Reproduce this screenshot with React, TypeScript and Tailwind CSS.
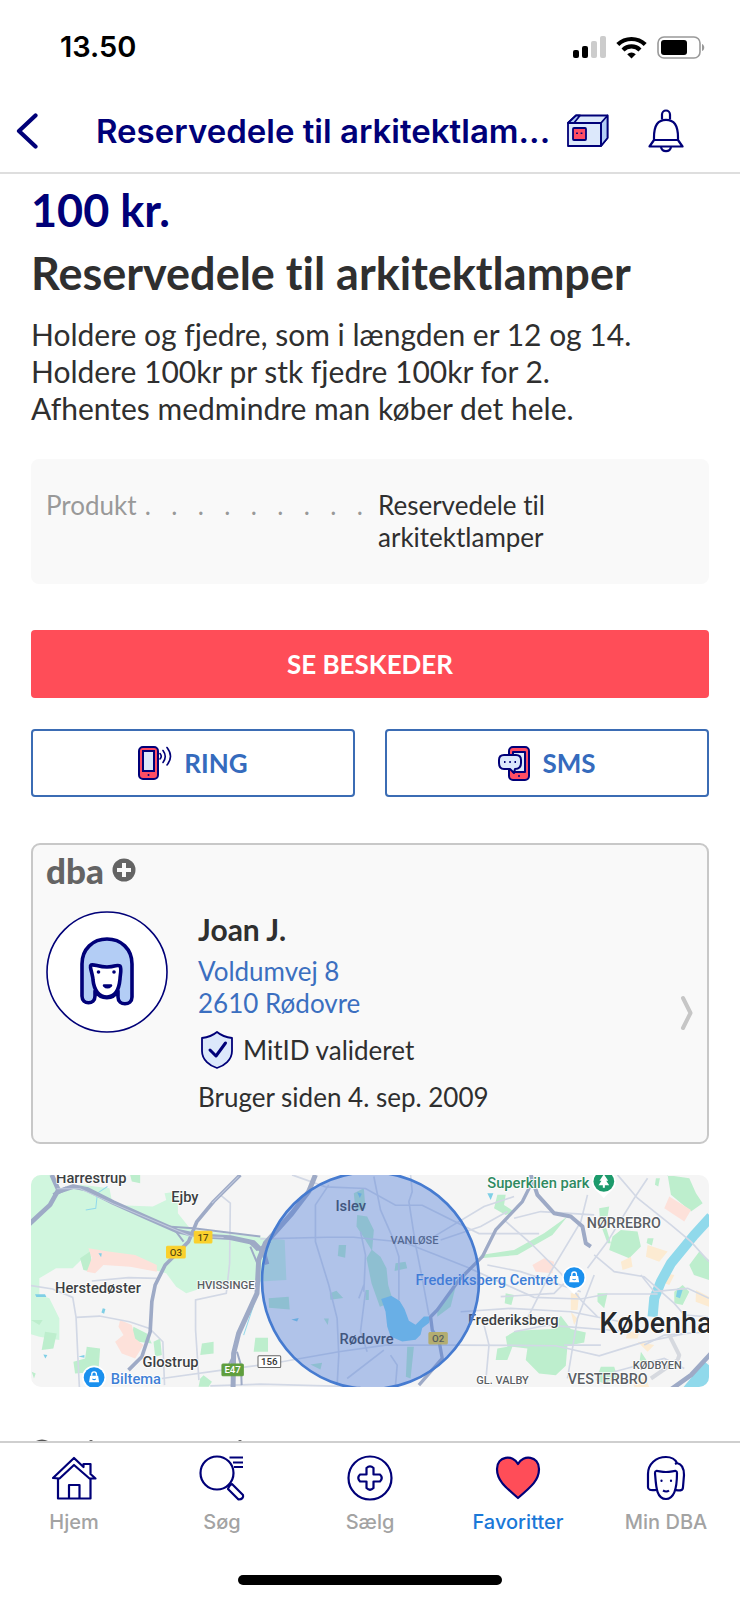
import type { ReactNode } from 'react';

const NAVY = '#000078';

function StatusBar() {
  return (
    <div className="flex h-[92px] items-center justify-between pt-[2px] pl-[60px] pr-[34px] text-black">
      <span className="text-[29px] leading-8 font-semibold">13.50</span>
      <div className="flex items-center gap-[10px]">
        {/* Signal */}
        <svg width="33" height="22" viewBox="0 0 33 22" aria-hidden="true">
          <rect x="0" y="14" width="6" height="8" rx="2" fill="#000" />
          <rect x="9" y="10" width="6" height="12" rx="2" fill="#000" />
          <rect x="18" y="5" width="6" height="17" rx="2" fill="#ccc" />
          <rect x="27" y="0" width="6" height="22" rx="2" fill="#ccc" />
        </svg>
        {/* Wifi */}
        <svg width="31" height="23" viewBox="0 0 31 23" fill="none" stroke="#000" strokeWidth="4.2" aria-hidden="true">
          <path d="M1.800 8.600a19.500 19.500 0 0 1 27.400 0" />
          <path d="M7 14a12 12 0 0 1 17 0" />
          <path d="M15.500 22.500l-4.300-4.300a6 6 0 0 1 8.600 0z" fill="#000" stroke="none" />
        </svg>
        {/* Battery */}
        <svg width="49" height="23" viewBox="0 0 49 23" aria-hidden="true">
          <rect x="1" y="1" width="42" height="21" rx="6" fill="none" stroke="#999" strokeWidth="1.600" />
          <rect x="4" y="4" width="26" height="15" rx="3" fill="#000" />
          <path d="M45 8c3 1 3 6 0 7z" fill="#999" />
        </svg>
      </div>
    </div>
  );
}

function Header() {
  return (
    <header className="flex h-[82px] items-center border-b-2 border-[#dedede] pb-[3px] pl-[16px] pr-[56px] text-[#000078]">
      <button type="button" aria-label="Tilbage" className="w-[80px] shrink-0">
        <svg width="22" height="36" viewBox="0 0 22 36" fill="none" stroke={NAVY} strokeWidth="4.200" strokeLinecap="round" strokeLinejoin="round">
          <path d="M19.500 2.500L3 18l16.500 15.500" />
        </svg>
      </button>
      <h1 className="min-w-0 flex-1 truncate text-[33px] leading-10 font-semibold">Reservedele til arkitektlam...</h1>
      <button type="button" aria-label="Pakke" className="ml-2 shrink-0">
        <svg width="42" height="33" viewBox="0 0 42 33" stroke={NAVY} strokeWidth="1.800" strokeLinejoin="round">
          <path d="M1 9L9 1.500h31.500V24L34 32H1z" fill="#dce8fb" />
          <path d="M34 9l6.500-7.500V24L34 32zM1 9l8-7.500h4L7 9z" fill="#b3cdf5" />
          <path d="M1 9h33v23" fill="none" />
          <rect x="6" y="14" width="13" height="12" rx="1" fill="#ff4d63" />
          <path d="M10 18.500v1.500M14.500 18.500v1.500" />
        </svg>
      </button>
      <button type="button" aria-label="Notifikationer" className="ml-[39px] shrink-0">
        <svg width="36" height="44" viewBox="0 0 36 44" fill="none" stroke={NAVY} strokeWidth="2.200" strokeLinejoin="round">
          <path d="M14 10.500V5.500a4 4 0 0 1 8 0v5" />
          <path d="M6 31c0-5-.5-11 3-16 4-5.500 14-5.500 18 0 3.500 5 3 11 3 16l4.500 6.500h-33z" />
          <path d="M6 31h24M13 38c1 5.500 9 5.500 10 0" />
        </svg>
      </button>
    </header>
  );
}

function PhoneIcon() {
  return (
    <svg width="34" height="34" viewBox="0 0 34 34" fill="none" stroke={NAVY} strokeWidth="2" aria-hidden="true">
      <rect x="1" y="1" width="19" height="32" rx="4" fill="#ff4d63" />
      <rect x="5" y="5" width="11" height="20" fill="#dce8fb" />
      <circle cx="10.500" cy="29" r="1" fill={NAVY} stroke="none" />
      <path d="M22 7.500q2.500 2.800 0 5.500M25 4.500q4.500 6 0 12M29 1.500q7 9 0 17.500" strokeWidth="1.600" strokeLinecap="round" />
    </svg>
  );
}

function SmsIcon() {
  return (
    <svg width="32" height="35" viewBox="0 0 32 35" fill="none" stroke={NAVY} strokeWidth="2" strokeLinejoin="round" aria-hidden="true">
      <rect x="11" y="1" width="20" height="33" rx="4" fill="#ff4d63" />
      <rect x="15" y="6" width="12" height="20" fill="#dce8fb" />
      <circle cx="21" cy="30" r="1" fill={NAVY} stroke="none" />
      <path d="M6 9h12q5 0 5 5v3q0 6-6 6l-1 4-4-4H6q-5 0-5-6v-3q0-5 5-5z" fill="#dce8fb" />
      <path d="M6 16h1.500M11.300 16h1.500M16.500 16H18" />
    </svg>
  );
}

function ContactButton({ icon, label }: { icon: ReactNode; label: string }) {
  return (
    <button
      type="button"
      className="flex h-[68px] items-center justify-center gap-3 rounded border-2 border-[#3b6cb4] text-[26px] leading-8 font-bold text-[#356bbd]"
    >
      {icon}
      {label}
    </button>
  );
}

function SellerCard() {
  return (
    <section className="mt-[46px] rounded-[9px] border-2 border-[#c8c8c8] bg-[#f9f9f9] px-[13px] pt-[6px] pb-[29px] text-[26px] leading-8 text-[#2f2f2f]">
      <div className="flex items-center gap-2 text-[#646464]">
        <span className="text-[35px] leading-[38px] font-black">dba</span>
        <svg width="24" height="24" viewBox="0 0 24 24" aria-hidden="true">
          <circle cx="12" cy="12" r="11.500" fill="#646464" />
          <path d="M12 5v14M5 12h14" stroke="#f9f9f9" strokeWidth="4" />
        </svg>
      </div>
      <div className="mt-[22px] flex items-start">
        <svg className="shrink-0" width="122" height="122" viewBox="0 0 122 122" fill="none" stroke={NAVY} strokeWidth="3.600" strokeLinecap="round" strokeLinejoin="round" aria-hidden="true">
          <circle cx="61" cy="61" r="60" fill="#fff" strokeWidth="1.600" />
          <path
            d="M36 53c0-15 11-25 25-25s25 10 25 25v33c0 9-14 9-14 0V80c-5 9-17 9-23 0v5c0 9-13 9-13 0z"
            fill="#b3cdf5"
          />
          <path
            d="M45 54c4-1 7 2 16 2s10-3 13-1c2 3 0 9 0 13-1 11-5 18-13 18s-13-7-14-17c0-5-4-14-2-15z"
            fill="#fff"
          />
          <path d="M58 74.500q3.500 3.500 7 0z" strokeWidth="2.500" />
          <circle cx="52.500" cy="61" r="1.800" fill={NAVY} stroke="none" />
          <circle cx="68" cy="61" r="1.800" fill={NAVY} stroke="none" />
        </svg>
        <div className="ml-[30px] flex-1">
          <h3 className="text-[30px] leading-9 font-bold">Joan J.</h3>
          <a href="#adresse" className="mt-[8px] block text-[#3b6fc0]">
            Voldumvej 8<br />
            2610 Rødovre
          </a>
          <div className="mt-[12px] flex items-center gap-[10px]">
            <svg className="ml-[3px]" width="32" height="38" viewBox="0 0 32 38" fill="none" stroke={NAVY} strokeWidth="1.800" strokeLinejoin="round" aria-hidden="true">
              <path d="M16 1q6 5 15 6v13c0 9-8 15-15 17C9 35 1 29 1 20V7q9-1 15-6z" fill="#dce8fb" />
              <path d="M9 19l6 6 9.500-13" strokeWidth="3" strokeLinecap="round" />
            </svg>
            MitID valideret
          </div>
          <p className="mt-[12px]">Bruger siden 4. sep. 2009</p>
        </div>
        <svg className="mt-[84px] shrink-0" width="14" height="36" viewBox="0 0 14 36" fill="none" stroke="#c6c6c6" strokeWidth="4" strokeLinecap="round" strokeLinejoin="round" aria-hidden="true">
          <path d="M3 3l7.500 15L3 33" />
        </svg>
      </div>
    </section>
  );
}

function Shield({ x, y, w, text, fill, color }: { x: number; y: number; w: number; text: string; fill: string; color: string }) {
  return (
    <g>
      <rect x={x} y={y} width={w} height="35" rx="3" fill={fill} stroke={color === '#333' ? '#666' : fill} strokeWidth="3" />
      <text x={x + w / 2} y={y + 28} textAnchor="middle" fontSize="29" fill={color}>{text}</text>
    </g>
  );
}

function ShopPin({ x, y }: { x: number; y: number }) {
  return (
    <g transform={`translate(${x} ${y})`}>
      <path d="M-36 0a36 36 0 1 1 72 0c0 26-22 30-36 50-14-20-36-24-36-50z" fill="#fff" />
      <circle r="31" fill="#1a90ee" />
      <path d="M-12-5h24l3 19h-30z" fill="#fff" />
      <path d="M-7-5v-5a7 7 0 0 1 14 0v5" fill="none" stroke="#fff" strokeWidth="4" />
      <path d="M-5 4q5 5 10 0" fill="none" stroke="#1a90ee" strokeWidth="3" />
    </g>
  );
}

// Drawn at three units per pixel
function AreaMap() {
  return (
    <svg
      className="mt-[31px] block h-[212px] w-full rounded-[10px]"
      viewBox="33 30 2031 636"
      preserveAspectRatio="xMidYMid slice"
      role="img"
      aria-label="Kort over Rødovre"
      fontFamily="Roboto, 'Liberation Sans', sans-serif"
      fontWeight="500"
    >
      <rect x="0" y="0" width="2100" height="700" fill="#f5f5f5" />

      {/* Parks */}
      <g fill="#d0f6de">
        <path d="M33 30h60l30 40 60-10 85 10 10 50 120 5 40-20-5-20 40-5v65l40 50 100 10 180 20 5 120-90 5-150 15-60 20-30-20-30-40-70-20-70-25-100-10-40 40-50 0-50 30 0 50 30 10 30 60v65l-60-10-65-20z" />
      </g>
      <g fill="#bdeecd">
        <path d="M180 280l30-20 10 60-30-5zM340 485l40 20 15 30-40-5-20-15z" />
        <path d="M75 500l35 5-10 45-35 5zM200 545l40 5-5 70-70 5-5-35 35-10z" />
        <path d="M400 530l20-10 5 50-20 5zM545 535l35-5v35l-40 5zM705 518h38v42h-43zM540 640l10-10 25 20-10 15h-30zM330 30h30v25l-25-5z" />
        <path d="M1000 85l30-15 5 60-30 10zM1010 150l30 5 20 40-5 60 25 20 18 35 5 50 15 50-40 15-25-70-15-75 15-25-25-40-20-30z" />
        <path d="M955 240h22l-3 38-22-5zM1125 295l30-5 5 20-38 8zM745 400l60-5 3 38-62-5zM928 385l20-8 20 22-38 5zM1035 375h10v30h-10zM1160 545h20l-10 95-14-5zM870 598l35-5-5 20zM910 460h15l-3 20z" />
        <path d="M1250 430l30-30 25-35-15 60-40 30zM1380 270l100-15 90-50 70-50-45 55-105 60-110 10z" />
        <path d="M1735 130l30-5-10 60 15 50h-10l-22-60zM1800 195l50 5 10 45-35 35-60-25 10-40zM1935 30l70 10 20 45 20 30-35 25-60-50-10-60zM2005 300l30-40 29 25v60l-45-15z" />
        <path d="M1455 515l30-18 110-5 25-40 30 40 45 10-5 30-50 10-5 60-30 28-50-5-40-40 5-35-45-5-15 40h-35l5-35 30-5z" />
        <path d="M1730 385l30 0-10 45-20-20zM1455 385l25 5-8 30-20-5zM1960 380l25-20 20 20-20 40-25-5zM1740 605l40 0 10 30-40 20-25-10z" />
        <path d="M1430 90l25 0-5 30 30 20-25 10-35-20zM1905 40l12 0-5 25-10-5zM1880 220l18 0-5 22-16-8zM1860 560l20 30-10 20-15-15zM35 620l12 5-5 15zM33 465l35 0-10 15z" />
      </g>
      <g fill="#fde1da">
        <path d="M205 250l60 10 80 10 65 30v20l-80-15-80-5-25 25-25-5 15-40zM300 465l35 15 10 40 25 20-25 40-40-15-20-35 25-20-15-25z" />
        <path d="M1535 300l35-20 30 10-5 35-50-5zM1945 95l65 40-20 35-60-40z" />
      </g>
      <g fill="#fcebd2">
        <path d="M1650 385l25 0-5 50h-20zM1800 290l30-15 5 30-30 10zM1880 240l60 20-25 30-40-15zM1935 325l25 5-15 30-25-10zM2025 375l39 20v30l-40-15zM1820 500l35 0-5 20-35 0zM1850 530l50 10-20 20zM1650 440l20 20-10 20zM1840 640l35 0 10 26-45 0z" />
      </g>

      {/* Water */}
      <path d="M1082 402l30-10 25 15 15 25 13 35 20 12 25-25 20 0-5 20-20 15-5 20-15 15-40 5-35-15-10-30-5-45z" fill="#7fd4f0" />
      <g fill="none" stroke="#90d9eb">
        <path d="M2070 155l-50 55-70 85-30 55-20 50-5 55" strokeWidth="30" />
        <path d="M2000 690l70-85" strokeWidth="50" />
        <path d="M262 65l-30 20-5 45-30 5M720 300l-5 60-15 60-30 90" strokeWidth="3" />
      </g>
      <g fill="#7fcfe6">
        <path d="M45 388l30 0 4 8-30 0zM235 265l10 0-2 12zM248 430l8 2-4 14-8-4zM70 568l12 2-6 10zM175 574l18-4v8zM1970 370l15 5-8 25-12-5zM1400 85l18 0-8 20zM813 463l22-4-5 10zM832 550l10 5zM1010 82l14 5-6 12z" />
      </g>

      {/* Side roads */}
      <g fill="none" stroke="#d2d8e5" strokeWidth="5">
        <path d="M33 362l65 10 60 25 10 60 5 110 5 100M168 457l70-4 90 17 60 20 40 40 5 130M215 348l110-10 85 2M600 90l30 25-2 180-10 90-92 20 0 90 10 150" />
        <path d="M425 640l180-25 150-20 200-35 140-20 220 0 290 2 130 30 130-40 120-25M570 662l150-5 300 8" />
        <path d="M815 30l100 36 120 5 90 50 80 0 170 85 180 0" />
        <path d="M720 222l200-5 80 0 150 15 90 35 100 40 200 90 140 5 80-15 150 0" />
        <path d="M925 60l-40 60 0 110 40 130 25 100 5 110-5 90M1060 35l20 100 35 80 20 60 0 130M1170 30l5 50-10 30 20 130 20 100 20 110" />
        <path d="M980 640l110-85M1110 570l20 30-5 60M1015 400l15-40M1035 380l-15 120 20 60M1020 200l15 70-5 110" />
        <path d="M1260 225l120-40 80-45M1240 215l150-90 90-30M1450 165l80 70 90 90 60 80 50 50" />
        <path d="M1320 440l150-10 180 10 150 30M1440 395l160-10 30-30M1400 300l100 20 180 60M1390 480l15 60-10 110" />
        <path d="M1720 270l60 50 90 15 90 80 30 35 70 5M1860 330l40 50 100-10 64 30M1720 330l-50 130-30 180" />
        <path d="M1790 30l60 70 100 80 60 50 54 60M1700 90l-20 80-90 150-70 140M1880 40l-40 60-80 130-60 80M1720 150l-160-10-80 20" />
        <path d="M1740 540l-110 0M1870 540l60-30 134-10M1780 620l150-40 60 30M1480 500l100-20 250 20" />
      </g>

      {/* Highways */}
      <g fill="none" stroke="#9eaac6" strokeLinejoin="round">
        <path d="M95 30l20 45-25 45-65 60M115 80l45-15 40 8 80 40 100 45 90 40 70 15 90 5 70 15 30 30 10 35" strokeWidth="14" />
        <path d="M100 90l40-20M660 30l-80 80-50 60-25 60-70 70-30 60-10 50-5 90-25 75-40 40" strokeWidth="11" />
        <path d="M885 30l-20 50-50 65-80 90-20 50-5 100-55 120-15 60-2 120" strokeWidth="15" />
        <path d="M440 185l80 5 200 25M460 190l30 40M640 570l-20 40M650 560l12 40 2 60M680 225l30 30 40-25M690 245l25 60" strokeWidth="6" />
        <path d="M1540 40l-35 70-80 85-40 80-70 70-65 90-20 20 5 40 20 30 10 55-70 80" strokeWidth="10" />
        <path d="M1530 30l20 60 50 55 50 10 35 30 10 50 15 10" strokeWidth="12" />
        <path d="M1940 680l70-50 60-65" strokeWidth="14" />
        <path d="M1945 510l30 60-5 15-80 55" strokeWidth="12" stroke="#d6d9df" />
      </g>
      <path d="M110 72l70 0 100 45 230 96 100 5M655 35l-80 80" fill="none" stroke="#c3cbdf" strokeWidth="3" />

      <Shield x={522} y={199} w={53} text="17" fill="#fad02c" color="#5b4b10" />
      <Shield x={439} y={244} w={56} text="O3" fill="#fad02c" color="#5b4b10" />
      <Shield x={1225} y={502} w={55} text="O2" fill="#fad02c" color="#5b4b10" />
      <Shield x={605} y={597} w={64} text="E47" fill="#5f9e3e" color="#fff" />
      <Shield x={713} y={572} w={68} text="156" fill="#fff" color="#333" />

      {/* Place names */}
      <g fill="#3c3f43" stroke="#fff" strokeWidth="5" strokeLinejoin="round" paintOrder="stroke" fontSize="44">
        <text x="108" y="53">Harrestrup</text>
        <text x="453" y="110">Ejby</text>
        <text x="105" y="383">Herstedøster</text>
        <text x="367" y="606">Glostrup</text>
        <text x="945" y="138" strokeWidth="0">Islev</text>
        <text x="957" y="536" strokeWidth="0">Rødovre</text>
        <text x="1342" y="479">Frederiksberg</text>
        <text x="1735" y="505" fontSize="86" fill="#26282b">København</text>
        <g fill="#5a5e64">
          <text x="530" y="371" fontSize="34">HVISSINGE</text>
          <text x="1110" y="238" fontSize="33" strokeWidth="0">VANLØSE</text>
          <text x="1698" y="190" fontSize="43">NØRREBRO</text>
          <text x="1836" y="613" fontSize="33">KØDBYEN</text>
          <text x="1641" y="657" fontSize="43">VESTERBRO</text>
          <text x="1367" y="657" fontSize="33">GL. VALBY</text>
        </g>
        <text x="272" y="658" fill="#3f7fd6">Biltema</text>
        <text x="1400" y="69" fill="#2f8a62">Superkilen park</text>
        <text x="1185" y="360" fill="#3f7fd6" strokeWidth="2">Frederiksberg Centret</text>
      </g>

      <ShopPin x={222} y={637} />
      <ShopPin x={1660} y={338} />
      <g transform="translate(1749 50)">
        <path d="M-36 0a36 36 0 1 1 72 0c0 26-22 30-36 50-14-20-36-24-36-50z" fill="#fff" />
        <circle r="31" fill="#1c9a6b" />
        <path d="M0-22l13 20H7l9 13H3v8h-6v-8h-13l9-13h-6z" fill="#fff" />
      </g>

      <circle cx="1050" cy="347" r="325" fill="#4878d8" fillOpacity=".4" stroke="#467bd0" strokeWidth="8" />
    </svg>
  );
}

const tabs = [
  {
    label: 'Hjem',
    icon: (
      <>
        <path d="M1 22L22 2l9.500 9V8h7v10l5 4.500h-6L22 9 7.500 22.500z" />
        <path d="M6 22v20.500h32.500V22M17 42V29h10.500v13" />
      </>
    ),
  },
  {
    label: 'Søg',
    icon: (
      <>
        <circle cx="17" cy="17" r="16.500" />
        <path d="M29.500 1.500H43M33 6.500h10M34 11h9" />
        <path d="M32 28l11 11q1 4-4.500 4.500L28 33q1-4 4-5zM28.500 28.500l2 2" />
      </>
    ),
  },
  {
    label: 'Sælg',
    icon: (
      <>
        <circle cx="22" cy="22" r="21.500" />
        <path d="M18.500 12q3.500-3.500 7 0v6.500H32q3.500 3.500 0 7h-6.500V32q-3.500 3.500-7 0v-6.500H12q-3.500-3.500 0-7h6.500z" />
      </>
    ),
  },
  {
    label: 'Favoritter',
    active: true,
    icon: <path d="M22 42C8 30 1 24 1 13 1 0 17-2 22 8 27-2 43 0 43 13c0 11-7 17-21 29z" fill="#ff4d58" />,
  },
  {
    label: 'Min DBA',
    icon: (
      <>
        <path d="M12.500 34c-4.500 0-8.500 1-8.500-3V18C4 8 12 1 22 1c5 0 9 2 11 6 5 1 7 6 7 12l-1 12c0 4-3 3.500-7.500 3" />
        <path d="M11 17c0-4 4-1 11-1s11-3 11 1c0 10-1 26-11 26S12 29 11 17zM19 34.500q3.500 2 6 0M33 7l-2 1" />
        <path d="M17.500 24.500v.5M27 24.500v.5" strokeLinecap="round" />
      </>
    ),
  },
];

function TabBar() {
  return (
    <nav className="border-t-2 border-[#cfcfcf] bg-white">
      <div className="grid grid-cols-5 pt-[13px]">
        {tabs.map(tab => (
          <a
            key={tab.label}
            href="#"
            className={`flex flex-col items-center gap-[8px] text-[20px] leading-7 font-medium ${tab.active ? 'text-[#1a78d8]' : 'text-[#a3a3a3]'}`}
          >
            <svg width="44" height="44" viewBox="0 0 44 44" fill="none" stroke={NAVY} strokeWidth="2.200" strokeLinejoin="round" overflow="visible" aria-hidden="true">
              {tab.icon}
            </svg>
            {tab.label}
          </a>
        ))}
      </div>
      <div className="mx-auto mt-[39px] mb-[15px] h-[10px] w-[264px] rounded-full bg-black" />
    </nav>
  );
}

export default function App() {
  return (
    <div className="flex min-h-screen flex-col bg-white font-['Inter','Liberation_Sans',sans-serif]">
      <StatusBar />
      <Header />
      <main className="px-[31px] pt-[10px] font-['Lato','Liberation_Sans',sans-serif] text-[#2f2f2f] [font-variant-ligatures:none]">
        <p className="text-[45px] leading-[52px] font-bold text-[#000078]">100 kr.</p>
        <h2 className="mt-[11px] text-[45px] leading-[52px] font-bold">Reservedele til arkitektlamper</h2>
        <p className="mt-[17px] text-[30px] leading-[37px]">
          Holdere og fjedre, som i længden er 12 og 14.
          <br />
          Holdere 100kr pr stk fjedre 100kr for 2.
          <br />
          Afhentes medmindre man køber det hele.
        </p>

        <dl className="mt-[32px] flex rounded-lg bg-[#f9f9f9] px-[15px] pt-[30px] pb-[31px] text-[26px] leading-8">
          <dt className="flex w-1/2 gap-[8px] pr-[7px] text-[#999]">
            Produkt
            <span className="flex flex-1 justify-between" aria-hidden="true">
              {[1, 2, 3, 4, 5, 6, 7, 8, 9].map(i => <span key={i}>.</span>)}
            </span>
          </dt>
          <dd className="w-[200px] pl-2">Reservedele til arkitektlamper</dd>
        </dl>

        <button type="button" className="mt-[46px] h-[68px] w-full rounded bg-[#ff4d58] text-[26px] leading-8 font-bold text-white">
          SE BESKEDER
        </button>
        <div className="mt-[31px] grid grid-cols-2 gap-[30px]">
          <ContactButton icon={<PhoneIcon />} label="RING" />
          <ContactButton icon={<SmsIcon />} label="SMS" />
        </div>

        <SellerCard />
        <AreaMap />
      </main>
      {/* Top edge of the next section, cut by the tab bar */}
      <svg className="mt-auto ml-[31px]" width="220" height="2" viewBox="0 0 220 2" fill="#555" aria-hidden="true">
        <path d="M5 2q6-3 12 0zM58 2q2-2 4 0zM207 2q2-2 4 0z" />
      </svg>
      <TabBar />
    </div>
  );
}
